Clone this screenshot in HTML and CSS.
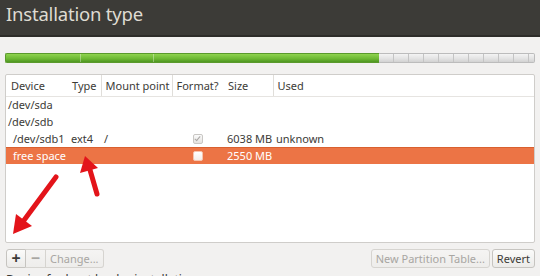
FILE: index.html
```html
<!DOCTYPE html>
<html lang="en">

<head>
    <meta charset="UTF-8">
    <meta name="viewport" content="width=device-width, initial-scale=1.0">
    <title>Installation type</title>
    <link rel="stylesheet" href="styles.css">
</head>

<body>
    <header class="titlebar">
        <h1>Installation type</h1>
    </header>

    <main class="content">
        <div class="usage-bar">
            <div class="usage-used" style="width: 70.5%"></div>
            <div class="usage-free"></div>
        </div>

        <div class="partitions">
            <table>
                <colgroup>
                    <col class="col-device">
                    <col class="col-type">
                    <col class="col-mount">
                    <col class="col-format">
                    <col class="col-size">
                    <col>
                </colgroup>
                <thead>
                    <tr>
                        <th>Device</th>
                        <th>Type</th>
                        <th class="sep">Mount point</th>
                        <th class="sep">Format?</th>
                        <th>Size</th>
                        <th class="sep">Used</th>
                    </tr>
                </thead>
                <tbody>
                    <tr class="disk">
                        <td>/dev/sda</td><td></td><td></td><td></td><td></td><td></td>
                    </tr>
                    <tr class="disk">
                        <td>/dev/sdb</td><td></td><td></td><td></td><td></td><td></td>
                    </tr>
                    <tr class="part">
                        <td>/dev/sdb1</td>
                        <td>ext4</td>
                        <td>/</td>
                        <td class="check"><span class="checkbox checked"></span></td>
                        <td>6038 MB</td>
                        <td>unknown</td>
                    </tr>
                    <tr class="part selected">
                        <td>free space</td>
                        <td></td>
                        <td></td>
                        <td class="check"><span class="checkbox"></span></td>
                        <td>2550 MB</td>
                        <td></td>
                    </tr>
                </tbody>
            </table>
        </div>

        <div class="toolbar">
            <div class="btn-group">
                <button class="btn icon">+</button>
                <button class="btn icon" disabled>&minus;</button>
                <button class="btn" disabled>Change...</button>
            </div>
            <div class="btn-row">
                <button class="btn" disabled>New Partition Table...</button>
                <button class="btn">Revert</button>
            </div>
        </div>

        <p class="bootloader">Device for boot loader installation:</p>
    </main>

    <!-- annotation arrows drawn over the screenshot -->
    <svg class="arrows" width="540" height="276" viewBox="0 0 540 276">
        <g fill="none" stroke="#e3141a" stroke-width="5" stroke-linecap="round" stroke-linejoin="round">
            <path d="M56 177 L19 227" />
            <path d="M97 194 L88 163" />
        </g>
        <g fill="#e3141a">
            <polygon points="13,234 16,214 32,226" />
            <polygon points="85,156 80,173 98,168" />
        </g>
    </svg>
</body>

</html>
```

FILE: styles.css
```css
/* Global settings */
*, *::before, *::after {
    box-sizing: border-box;
}

html,
body {
    margin: 0;
    padding: 0;
    width: 540px;
    height: 276px;
    overflow: hidden;
    background-color: #f2f1f0;
    font-family: 'Noto Sans', 'DejaVu Sans', sans-serif;
    color: #3c3b37;
}

.titlebar {
    height: 37px;
    background-color: #3c3b37;
    border-bottom: 2px solid #2d2c29;
    display: flex;
    align-items: center;
    padding: 0 6px 8px;
}

.titlebar h1 {
    margin: 0;
    font-size: 18.5px;
    font-weight: normal;
    color: #dfdbd2;
    letter-spacing: -0.2px;
}

.content {
    padding: 16px 5px 0 5px;
}

/* Disk usage bar */
.usage-bar {
    display: flex;
    height: 10px;
    margin: 0 0 11px 0;
}

.usage-used {
    border: 1px solid #5a9a2c;
    border-right: none;
    border-radius: 2px 0 0 2px;
    background-image:
        linear-gradient(90deg, transparent 74px, rgba(255, 255, 255, 0.35) 74px, rgba(255, 255, 255, 0.35) 75px, transparent 75px),
        linear-gradient(90deg, transparent 147px, rgba(255, 255, 255, 0.35) 147px, rgba(255, 255, 255, 0.35) 148px, transparent 148px),
        linear-gradient(#8fd34f, #6cb833 60%, #4f9622);
}

.usage-free {
    flex: 1;
    border: 1px solid #bcbcbc;
    border-left: none;
    border-radius: 0 2px 2px 0;
    background-image:
        repeating-linear-gradient(90deg, transparent 0, transparent 14px, #c4c4c4 14px, #c4c4c4 15px),
        linear-gradient(#f4f4f4, #e2e2e2 60%, #d2d2d2);
}

/* Partition list */
.partitions {
    height: 169px;
    background-color: #fff;
    border: 1px solid #cfcdca;
    border-radius: 2px;
    overflow: hidden;
}

.partitions table {
    width: 100%;
    border-collapse: collapse;
    table-layout: fixed;
    font-size: 11px;
}

.col-device { width: 62px; }
.col-type { width: 33px; }
.col-mount { width: 71px; }
.col-format { width: 52px; }
.col-size { width: 49px; }

.partitions th {
    height: 21px;
    padding: 0 0 0 4px;
    text-align: left;
    font-weight: normal;
    color: #3c3b37;
    border-bottom: 1px solid #e6e4e1;
    white-space: nowrap;
}

.partitions th:first-child {
    padding-left: 5px;
}

.partitions th.sep {
    border-left: 1px solid #e0deda;
}

.partitions td {
    height: 17px;
    padding: 0 0 0 3px;
    white-space: nowrap;
    color: #3c3b37;
    font-size: 11px;
}

.partitions .disk td:first-child {
    padding-left: 2px;
}

.partitions .part td:first-child {
    padding-left: 7px;
}

.partitions td.check {
    text-align: center;
    padding: 0;
}

.partitions .selected td {
    background-color: #ec7445;
    color: #fff;
    border-top: 1px solid #d9602f;
}

.checkbox {
    display: inline-block;
    width: 10px;
    height: 10px;
    border: 1px solid #c9c7c4;
    border-radius: 2px;
    background: linear-gradient(#fbfbfb, #e4e2df);
    vertical-align: middle;
    position: relative;
    top: -1px;
}

.checkbox.checked::after {
    content: "";
    position: absolute;
    left: 2px;
    top: 0;
    width: 3px;
    height: 6px;
    border: solid #a9a7a4;
    border-width: 0 1.5px 1.5px 0;
    transform: rotate(40deg);
}

.selected .checkbox {
    border-color: #f6c4ae;
    background: linear-gradient(#ffffff, #f3ede9);
}

/* Buttons under the list */
.toolbar {
    display: flex;
    justify-content: space-between;
    margin-top: 6px;
}

.btn-group {
    display: flex;
    margin-left: 1px;
}

.btn-row {
    display: flex;
    gap: 2px;
}

.btn {
    height: 19px;
    padding: 0 4px;
    font-family: inherit;
    font-size: 11px;
    color: #3c3b37;
    background: linear-gradient(#fbfbfa, #ecebe9);
    border: 1px solid #c6c4c0;
    border-radius: 3px;
    line-height: 16px;
}

.btn:disabled {
    color: #a8a6a2;
    background: linear-gradient(#f5f4f3, #eeedeb);
    border-color: #d6d4d0;
}

.btn-group .btn {
    border-radius: 0;
}

.btn-group .btn:first-child {
    border-radius: 3px 0 0 3px;
}

.btn-group .btn:last-child {
    border-radius: 0 3px 3px 0;
}

.btn-group .btn + .btn {
    border-left: none;
}

.btn.icon {
    width: 20px;
    padding: 0;
    font-size: 16px;
    font-weight: bold;
    line-height: 15px;
}

.bootloader {
    margin: 3px 0 0 1px;
    font-size: 12px;
}

.arrows {
    position: absolute;
    top: 0;
    left: 0;
    pointer-events: none;
}
```
